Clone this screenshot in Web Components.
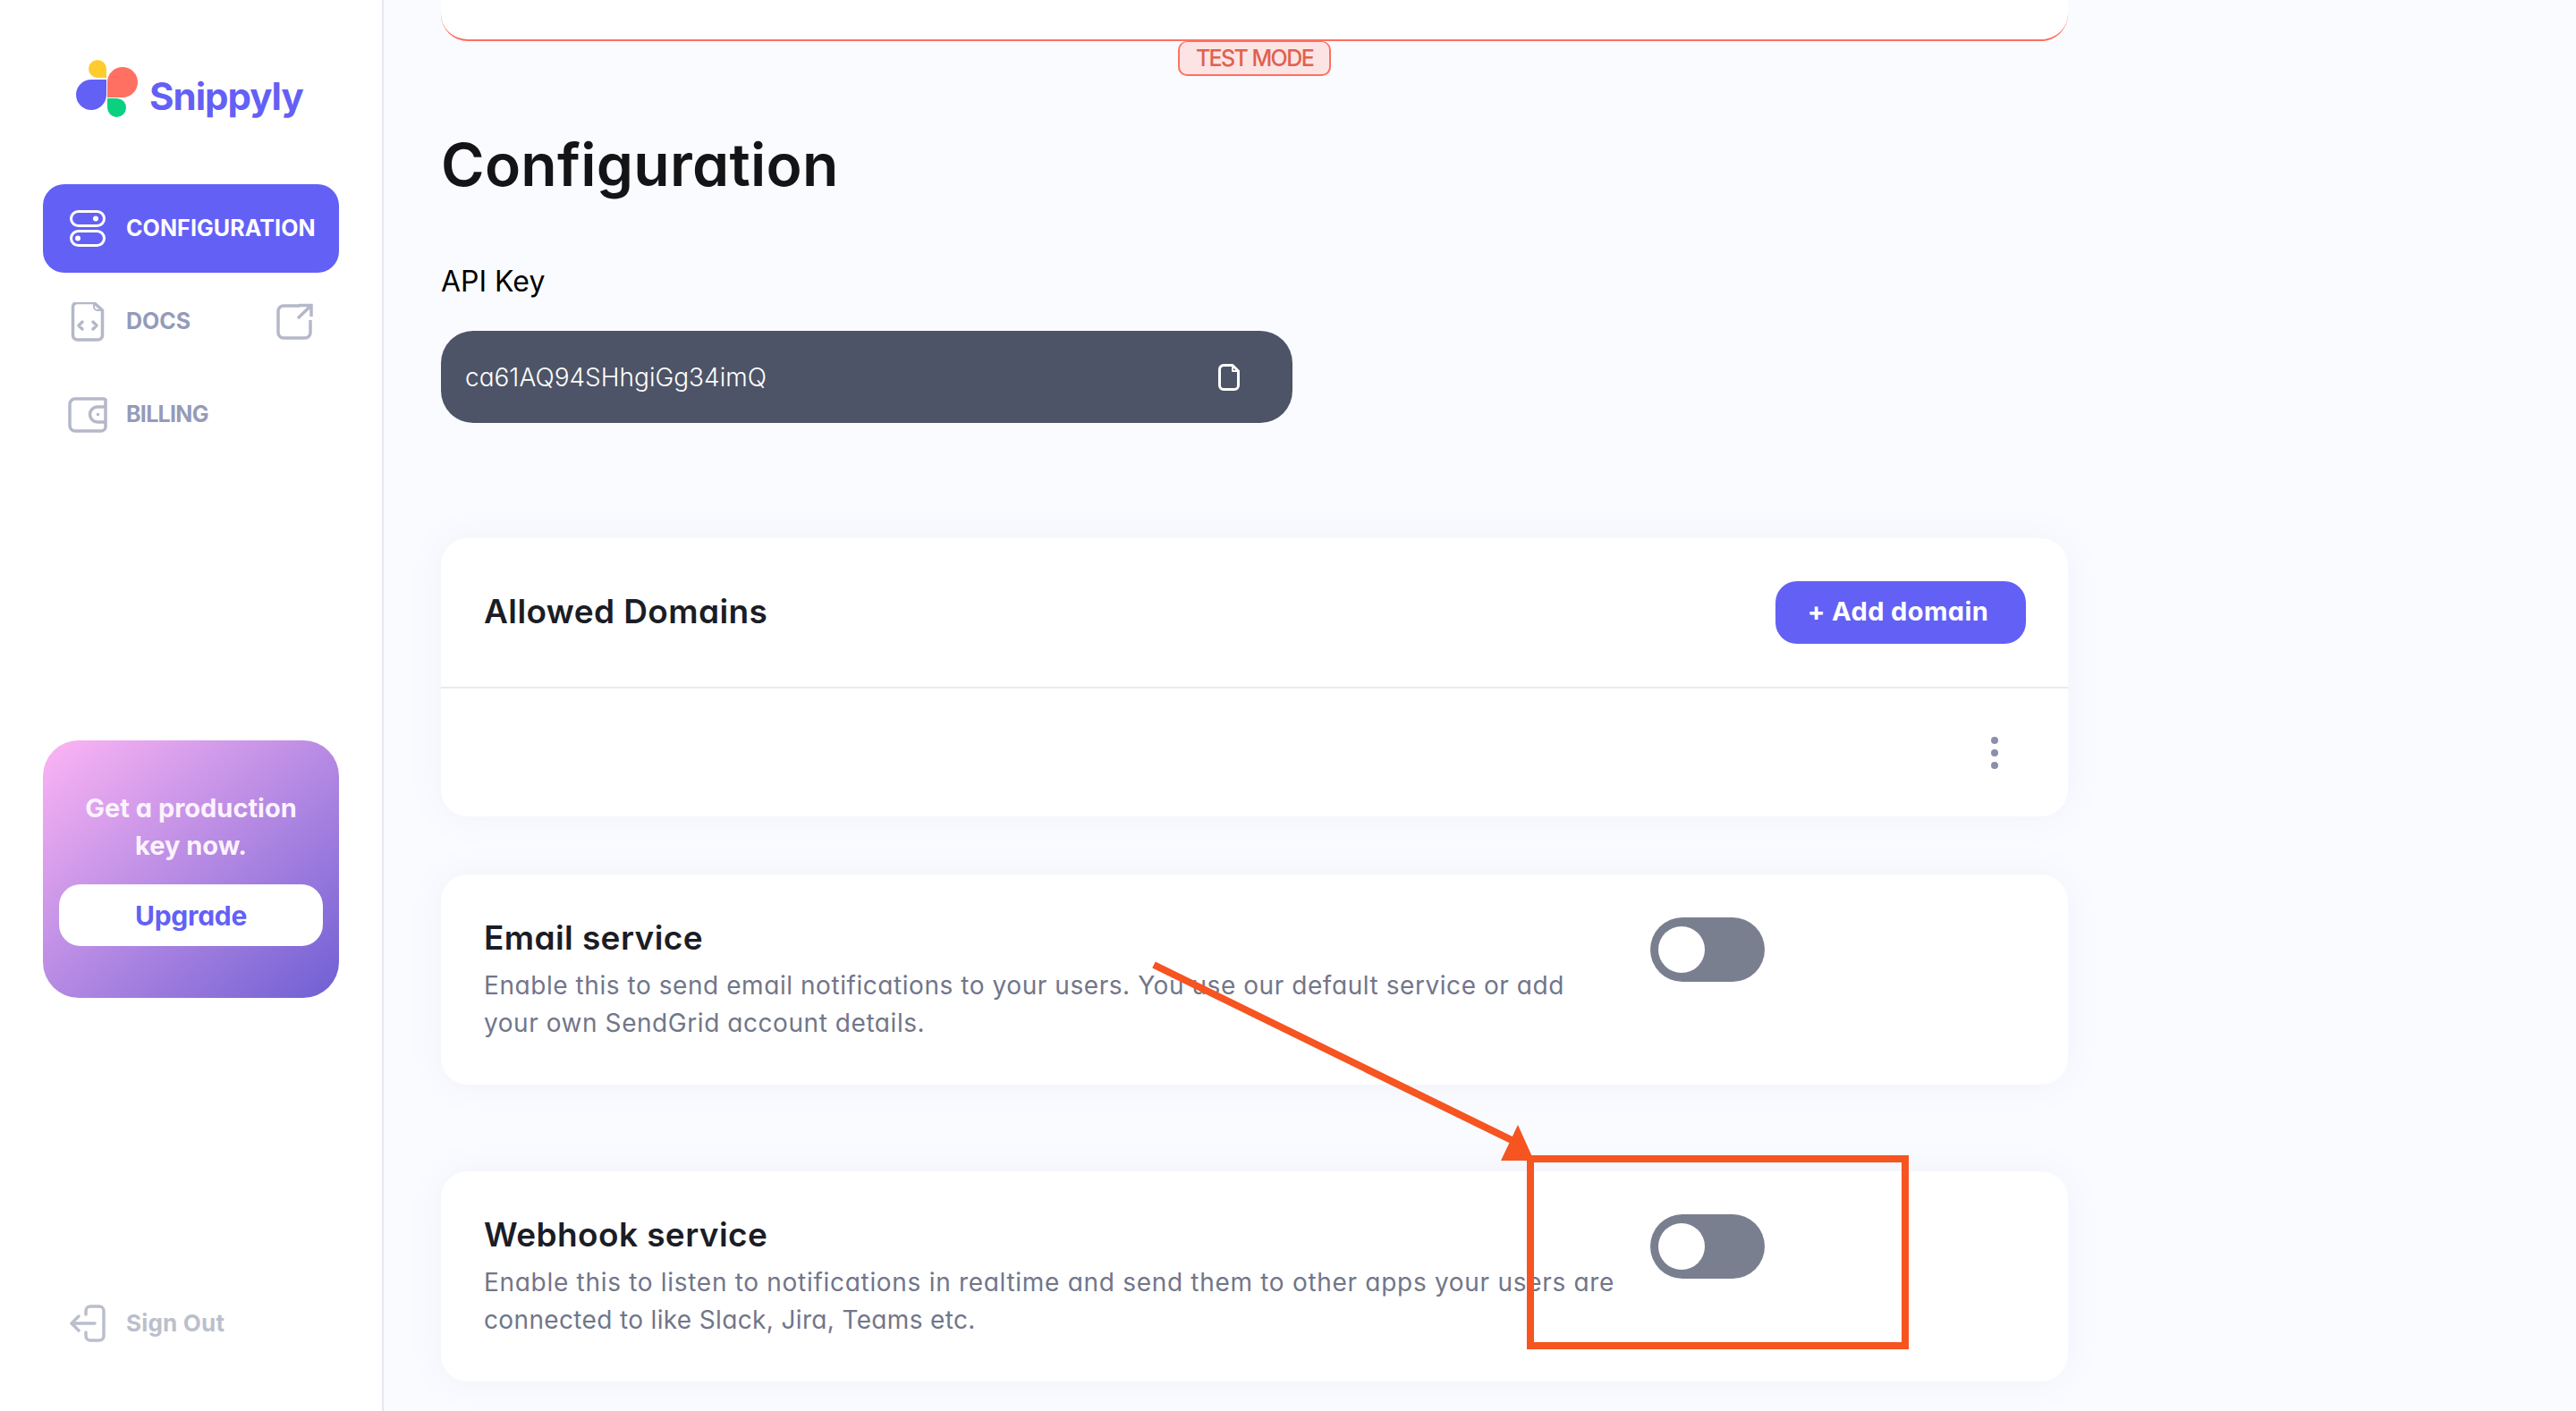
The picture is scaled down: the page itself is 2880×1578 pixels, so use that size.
<!DOCTYPE html>
<html lang="en">
<head>
<meta charset="utf-8">
<title>Snippyly</title>
<style>
  html, body { margin: 0; height: 100%; }
  body { background: #fafbff; font-family: Inter, "Noto Sans", sans-serif; font-feature-settings: "cv11"; overflow: hidden; }
</style>
</head>
<body>
<sn-shell>
  <sn-sidebar slot="side">
    <sn-logo></sn-logo>
    <sn-nav-item active label="CONFIGURATION" style="letter-spacing:.1px">
      <svg slot="icon" width="44" height="44" viewBox="0 0 44 44" fill="none" stroke="#fff" stroke-width="3"><rect x="3.5" y="2.5" width="37" height="16" rx="8"/><rect x="3.5" y="24.5" width="37" height="16" rx="8"/><circle cx="31" cy="10.5" r="3" fill="#fff" stroke="none"/><circle cx="11" cy="32.5" r="3" fill="#fff" stroke="none"/></svg>
    </sn-nav-item>
    <sn-nav-item label="DOCS">
      <svg slot="icon" width="44" height="44" viewBox="0 0 44 44" fill="none" stroke="#b4b8c9" stroke-width="3.5" stroke-linejoin="round" stroke-linecap="round"><path d="M9 0.5H29L38.5 9V37a5 5 0 0 1-5 5H10.5a5 5 0 0 1-5-5V5a5 5 0 0 1 4-4.500Z"/><path d="M29 1V5a4 4 0 0 0 4 4h5" stroke-width="2"/><path d="M16 22l-4 4 4 4M28 22l4 4-4 4"/></svg>
      <svg slot="end" width="42" height="42" viewBox="0 0 42 42" fill="none" stroke="#b4b8c9" stroke-width="3.500"><path d="M27 3H9a6 6 0 0 0-6 6v24a6 6 0 0 0 6 6h24a6 6 0 0 0 6-6V19"/><path d="M26 2.500H40V15M39.500 3L25 17"/></svg>
    </sn-nav-item>
    <sn-nav-item label="BILLING" style="letter-spacing:-.7px">
      <svg slot="icon" width="44" height="44" viewBox="0 0 44 44" fill="none" stroke="#b4b8c9" stroke-width="3.500"><path d="M42 5a3 3 0 0 0-3-1H8a6 6 0 0 0-6 6v24a6 6 0 0 0 6 6h29a5 5 0 0 0 5-5Z"/><path d="M42 13H33a8.500 8.500 0 0 0 0 17h9" stroke-width="3.500"/><circle cx="33.500" cy="21.500" r="1.800" fill="#b4b8c9" stroke="none"/></svg>
    </sn-nav-item>
    <sn-promo>
      <span slot="text">Get a production<br>key now.</span>
      <span slot="action">Upgrade</span>
    </sn-promo>
    <sn-signout>Sign Out</sn-signout>
  </sn-sidebar>

  <sn-topbar>TEST MODE</sn-topbar>
  <sn-heading>Configuration</sn-heading>
  <sn-api-key label="API Key" value="ca61AQ94SHhgiGg34imQ"></sn-api-key>
  <sn-domains>Allowed Domains</sn-domains>
  <sn-service style="margin-top:65px">
    <span slot="title">Email service</span>
    <span style="letter-spacing:.56px">Enable this to send email notifications to your users. You use our default service or add<br>your own SendGrid account details.</span>
  </sn-service>
  <sn-service style="margin-top:97px">
    <span slot="title">Webhook service</span>
    <span style="letter-spacing:.7px">Enable this to listen to notifications in realtime and send them to other apps your users are</span><br><span style="letter-spacing:.35px">connected to like Slack, Jira, Teams etc.</span>
  </sn-service>

  <sn-annotation slot="over"></sn-annotation>
</sn-shell>

<script>
const FONT = `Inter, "Noto Sans", sans-serif`;

customElements.define('sn-shell',
  class extends HTMLElement {
    constructor() {
      super();
      this.attachShadow({ mode: 'open' });
      this.shadowRoot.innerHTML = `<style>
        :host { display: grid; grid-template-columns: 429px 1fr; height: 1578px; position: relative; overflow: hidden; }
        main { padding-left: 64px; width: 1819px; display: flex; flex-direction: column; }
      </style><slot name="side"></slot><main><slot></slot></main><slot name="over"></slot>`;
    }
  }
);

customElements.define('sn-sidebar',
  class extends HTMLElement {
    constructor() {
      super();
      this.attachShadow({ mode: 'open' });
      this.shadowRoot.innerHTML = `<style>
        :host { display: flex; flex-direction: column; gap: 5px; box-sizing: border-box; height: 1578px; padding: 66px 48px 0; background: #fff; border-right: 2px solid #e6e8f0; }
      </style><slot></slot>`;
    }
  }
);

customElements.define('sn-logo',
  class extends HTMLElement {
    constructor() {
      super();
      this.attachShadow({ mode: 'open' });
      this.shadowRoot.innerHTML = `<style>
        :host { display: flex; align-items: flex-start; gap: 12px; height: 66px; margin: 0 0 69px 37px; font: 700 42px/1 ${FONT}; font-feature-settings: "cv11"; color: #6360f6; }
        span { margin-top: 21px; letter-spacing: -1px; }
      </style><svg width="70" height="66" viewBox="0 0 70 66">
        <path d="M34 1V21H24A10 10 0 1 1 34 11Z" fill="#ffcc2e"/>
        <path d="M35 43V26A17 17 0 1 1 52 43Z" fill="#ff7062"/>
        <path d="M34 23V40A17 17 0 1 1 17 23Z" fill="#6360f6"/>
        <path d="M35 44H46A10.500 10.500 0 1 1 35 54.500Z" fill="#0bd07f"/>
      </svg><span>Snippyly</span>`;
    }
  }
);

customElements.define('sn-nav-item',
  class extends HTMLElement {
    constructor() {
      super();
      this.attachShadow({ mode: 'open' });
      this.shadowRoot.innerHTML = `<style>
        :host { display: flex; align-items: center; box-sizing: border-box; height: 99px; padding: 0 29px 0 28px; border-radius: 24px; font: 700 25px/1 ${FONT}; font-feature-settings: "cv11"; color: #959bb9; letter-spacing: 0; }
        :host([active]) { background: #6360f6; color: #fff; }
        .icon { display: flex; width: 44px; height: 44px; margin-right: 21px; }
        .label { flex: 1; }
        .end { display: flex; }
      </style><div class="icon"><slot name="icon"></slot></div><span class="label"></span><div class="end"><slot name="end"></slot></div>`;
    }

    connectedCallback() {
      this.shadowRoot.querySelector('.label').textContent = this.getAttribute('label');
    }
  }
);

customElements.define('sn-promo',
  class extends HTMLElement {
    constructor() {
      super();
      this.attachShadow({ mode: 'open' });
      this.shadowRoot.innerHTML = `<style>
        :host { display: flex; flex-direction: column; align-items: center; box-sizing: border-box; height: 288px; margin-top: 310px; padding: 55px 18px 0; border-radius: 40px; background: linear-gradient(140deg, #fdb5f4 0%, #6f5fd3 100%); font: 700 29px/42px ${FONT}; font-feature-settings: "cv11"; color: #fbf3fd; text-align: center; letter-spacing: 0; }
        .action { display: flex; align-items: center; justify-content: center; align-self: stretch; height: 69px; margin-top: 22px; border-radius: 24px; background: #fff; color: #6360f6; font-size: 30px; letter-spacing: -.3px; }
      </style><div><slot name="text"></slot></div><div class="action"><slot name="action"></slot></div>`;
    }
  }
);

customElements.define('sn-signout',
  class extends HTMLElement {
    constructor() {
      super();
      this.attachShadow({ mode: 'open' });
      this.shadowRoot.innerHTML = `<style>
        :host { display: flex; align-items: center; gap: 23px; height: 42px; margin: 338px 0 0 30px; font: 700 26px/1 ${FONT}; font-feature-settings: "cv11"; color: #bbbfcc; letter-spacing: .2px; }
      </style><svg width="40" height="42" viewBox="0 0 40 42" fill="none" stroke="#bbbfcc" stroke-width="3.500" stroke-linecap="round" stroke-linejoin="round"><path d="M18 11V7a5 5 0 0 1 5-5h10a5 5 0 0 1 5 5v28a5 5 0 0 1-5 5H23a5 5 0 0 1-5-5v-4"/><path d="M28 21H3M10 13l-8 8 8 8"/></svg><span><slot></slot></span>`;
    }
  }
);

customElements.define('sn-topbar',
  class extends HTMLElement {
    constructor() {
      super();
      this.attachShadow({ mode: 'open' });
      this.shadowRoot.innerHTML = `<style>
        :host { display: flex; flex-direction: column; align-items: center; font: 500 25px/1 ${FONT}; font-feature-settings: "cv11"; color: #e0614f; }
        .bar { align-self: stretch; box-sizing: border-box; height: 46px; background: #fff; border-bottom: 2px solid #ff6f61; border-radius: 0 0 30px 30px; }
        .badge { display: flex; align-items: center; justify-content: center; box-sizing: border-box; width: 171px; height: 39px; padding-top: 1px; background: #fde4e4; border: 2px solid #ff6f61; border-top-width: 1px; border-radius: 10px; letter-spacing: -1.6px; }
      </style><div class="bar"></div><div class="badge"><slot></slot></div>`;
    }
  }
);

customElements.define('sn-heading',
  class extends HTMLElement {
    constructor() {
      super();
      this.attachShadow({ mode: 'open' });
      this.shadowRoot.innerHTML = `<style>
        :host { display: block; margin-top: 51px; font: 600 66px/96px ${FONT}; font-feature-settings: "cv11"; color: #141416; letter-spacing: .25px; }
      </style><slot></slot>`;
    }
  }
);

customElements.define('sn-api-key',
  class extends HTMLElement {
    constructor() {
      super();
      this.attachShadow({ mode: 'open' });
      this.shadowRoot.innerHTML = `<style>
        :host { display: block; margin-top: 59px; font: 400 32px/48px ${FONT}; font-feature-settings: "cv11"; color: #000; }
        .field { display: flex; align-items: center; justify-content: space-between; box-sizing: border-box; width: 952px; height: 103px; margin-top: 31px; padding: 0 59px 0 27px; border-radius: 36px; background: #4e5467; color: #fff; font-size: 28px; font-weight: 300; }
      </style><div class="label"></div><div class="field"><span class="value"></span>
        <svg width="24" height="30" viewBox="0 0 24 30" fill="none" stroke="#fff" stroke-width="3" stroke-linejoin="round"><path d="M6 1.500H16L22.500 8V24a4.500 4.500 0 0 1-4.500 4.500H6A4.500 4.500 0 0 1 1.500 24V6A4.500 4.500 0 0 1 6 1.500Z"/><path d="M16 2V8H22" stroke-width="2"/></svg>
      </div>`;
    }

    connectedCallback() {
      this.shadowRoot.querySelector('.label').textContent = this.getAttribute('label');
      this.shadowRoot.querySelector('.value').textContent = this.getAttribute('value');
    }
  }
);

customElements.define('sn-domains',
  class extends HTMLElement {
    constructor() {
      super();
      this.attachShadow({ mode: 'open' });
      this.shadowRoot.innerHTML = `<style>
        :host { display: block; height: 311px; margin-top: 129px; background: #fff; border-radius: 30px; box-shadow: 0 0 40px rgba(110, 125, 190, .07); font: 600 37px/1 ${FONT}; font-feature-settings: "cv11"; color: #1b1d26; letter-spacing: .4px; }
        header { display: flex; align-items: center; justify-content: space-between; box-sizing: border-box; height: 168px; padding: 0 47px 0 48px; border-bottom: 2px solid #e6ebf0; }
        header span { padding-bottom: 3px; }
        button { width: 280px; height: 70px; padding: 0 6px 3px 0; border: 0; border-radius: 24px; background: #6360f6; color: #fff; font: 700 29px/1 ${FONT}; font-feature-settings: "cv11"; letter-spacing: .4px; }
        .row { display: flex; align-items: center; justify-content: flex-end; height: 143px; padding-right: 78px; }
        .dots { display: flex; flex-direction: column; gap: 6px; }
        .dots i { width: 8px; height: 8px; border-radius: 50%; background: #8a90aa; }
      </style><header><span><slot></slot></span><button>+ Add domain</button></header>
      <div class="row"><div class="dots"><i></i><i></i><i></i></div></div>`;
    }
  }
);

customElements.define('sn-service',
  class extends HTMLElement {
    constructor() {
      super();
      this.attachShadow({ mode: 'open' });
      this.shadowRoot.innerHTML = `<style>
        :host { display: grid; grid-template-columns: 1304px auto; box-sizing: border-box; height: 235px; padding: 48px 0 0 48px; background: #fff; border-radius: 30px; box-shadow: 0 0 40px rgba(110, 125, 190, .07); }
        .title { font: 600 37px/46px ${FONT}; font-feature-settings: "cv11"; color: #1b1d26; letter-spacing: .4px; }
        .desc { margin-top: 9px; font: 400 28px/42px ${FONT}; font-feature-settings: "cv11"; color: #71768a; white-space: nowrap; }
      </style><div><div class="title"><slot name="title"></slot></div><div class="desc"><slot></slot></div></div><sn-toggle></sn-toggle>`;
    }
  }
);

customElements.define('sn-toggle',
  class extends HTMLElement {
    constructor() {
      super();
      this.attachShadow({ mode: 'open' });
      this.shadowRoot.innerHTML = `<style>
        :host { display: block; box-sizing: border-box; width: 128px; height: 72px; padding: 10px 9px; border-radius: 36px; background: #7a7f90; }
        i { display: block; width: 52px; height: 52px; border-radius: 50%; background: #fff; }
      </style><i></i>`;
    }
  }
);

customElements.define('sn-annotation',
  class extends HTMLElement {
    constructor() {
      super();
      this.attachShadow({ mode: 'open' });
      this.shadowRoot.innerHTML = `<style>
        :host { position: absolute; inset: 0; pointer-events: none; }
      </style><svg width="2880" height="1578" viewBox="0 0 2880 1578" fill="none">
        <path d="M1290 1079L1692 1276" stroke="#f65420" stroke-width="8"/>
        <path d="M1697 1258L1715 1298L1678 1298Z" fill="#f65420"/>
        <rect x="1711" y="1296" width="419" height="209" stroke="#f65420" stroke-width="8"/>
      </svg>`;
    }
  }
);
</script>
</body>
</html>
